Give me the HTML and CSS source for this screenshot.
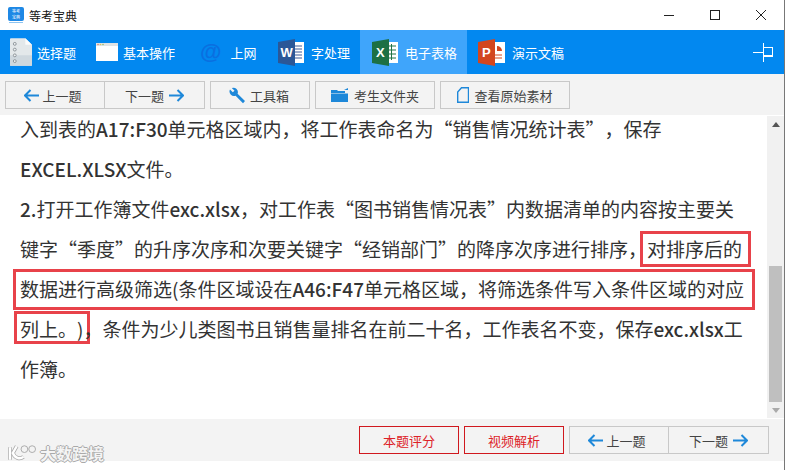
FILE: index.html
```html
<!DOCTYPE html>
<html lang="zh-CN">
<head>
    <meta charset="UTF-8">
    <title>等考宝典</title>
    <link rel="stylesheet" href="styles.css">
</head>
<body>
    <!-- Title bar -->
    <div class="titlebar">
        <svg class="logo" width="16" height="16" viewBox="0 0 16 16">
            <rect x="0" y="0" width="16" height="14" rx="2" fill="#1e88e5"/>
            <text x="8" y="6" class="logo-text">等考</text>
            <text x="8" y="12" class="logo-text">宝典</text>
            <rect x="1" y="15" width="14" height="1" fill="#8ec4f1"/>
        </svg>
        <span class="app-name">等考宝典</span>
        <div class="win-buttons">
            <svg width="12" height="12" viewBox="0 0 12 12"><path d="M1 6.500h10" stroke="#222" fill="none"/></svg>
            <svg width="12" height="12" viewBox="0 0 12 12"><rect x="1.500" y="1.500" width="9" height="9" stroke="#222" fill="none"/></svg>
            <svg width="12" height="12" viewBox="0 0 12 12"><path d="M1 1l10 10M11 1L1 11" stroke="#222" fill="none"/></svg>
        </div>
    </div>

    <!-- Blue subject tabs -->
    <div class="tabs">
        <div class="tab tab-choice">
            <svg width="22" height="28" viewBox="0 0 23 29">
                <path d="M1 0h15l7 7v21a1 1 0 0 1-1 1H1a1 1 0 0 1-1-1V1a1 1 0 0 1 1-1z" fill="#e3e8ea"/>
                <path d="M16 0l7 7h-7z" fill="#fafbfb"/>
                <path d="M0 18h23v10a1 1 0 0 1-1 1H1a1 1 0 0 1-1-1z" fill="#cfd8de"/>
                <g fill="#eef1f2" stroke="#8b9398"><circle cx="5" cy="6" r="1.500"/><circle cx="5" cy="12" r="1.500"/><circle cx="5" cy="18" r="1.500"/><circle cx="5" cy="24" r="1.500"/></g>
            </svg>
            <span>选择题</span>
        </div>
        <div class="tab tab-basic">
            <svg width="22" height="18" viewBox="0 0 22 18">
                <rect width="22" height="18" fill="#fff"/>
                <rect width="22" height="3" fill="#dfe3e5"/>
                <circle cx="2" cy="1.500" r=".8" fill="#e2836b"/><circle cx="4.500" cy="1.500" r=".8" fill="#e0c15e"/><circle cx="7" cy="1.500" r=".8" fill="#8cc16a"/>
            </svg>
            <span>基本操作</span>
        </div>
        <div class="tab tab-web">
            <span class="at">@</span>
            <span>上网</span>
        </div>
        <div class="tab tab-word">
            <svg width="26" height="27" viewBox="0 0 26 27">
                <rect x="13" y="3" width="13" height="21" fill="#fff"/>
                <path d="M15 7h9M15 10h9M15 13h9M15 16h9M15 19h9" stroke="#3c5a9a"/>
                <path d="M0 3L17 0v27L0 24z" fill="#2b5797"/>
                <text x="2.500" y="18" class="icon-letter">W</text>
            </svg>
            <span>字处理</span>
        </div>
        <div class="tab tab-excel active">
            <svg width="26" height="27" viewBox="0 0 26 27">
                <rect x="13" y="3" width="13" height="21" fill="#fff"/>
                <path d="M15 7h9M15 11h9M15 15h9M15 19h9M19.500 5v16" stroke="#217346"/>
                <path d="M0 3L17 0v27L0 24z" fill="#1d7044"/>
                <text x="4" y="18" class="icon-letter">X</text>
            </svg>
            <span>电子表格</span>
        </div>
        <div class="tab tab-ppt">
            <svg width="27" height="27" viewBox="0 0 27 27">
                <rect x="13" y="3" width="14" height="21" fill="#fff"/>
                <path d="M19 7a5 5 0 0 1 5 5h-5z" fill="#d2461f"/>
                <path d="M16 16h8M16 19h8" stroke="#d2461f"/>
                <path d="M0 3L17 0v27L0 24z" fill="#d2461f"/>
                <text x="4" y="18" class="icon-letter">P</text>
            </svg>
            <span>演示文稿</span>
        </div>
        <svg class="pin" width="21" height="19" viewBox="0 0 21 19">
            <path d="M0 9.500h10M10.500 0v19" stroke="#fff" fill="none"/>
            <rect x="10.500" y="4.500" width="9" height="9" stroke="#fff" fill="none"/>
            <rect x="10" y="12" width="10" height="2" fill="#fff"/>
        </svg>
    </div>

    <!-- Tool row -->
    <div class="toolbar">
        <div class="btn-group">
            <button class="btn"><svg class="arrow" width="15" height="13" viewBox="0 0 15 13"><path d="M6.500 1L1 6.500l5.500 5.500M1 6.500h14" /></svg>上一题</button>
            <button class="btn">下一题<svg class="arrow" width="15" height="13" viewBox="0 0 15 13"><path d="M8.500 1L14 6.500 8.500 12M14 6.500H0" /></svg></button>
        </div>
        <button class="btn w-tool">
            <svg width="17" height="17" viewBox="0 0 17 17"><path d="M1 2.500L3.800 5.300 5.500 3.800 2.800 1A4.500 4.500 0 0 1 8.600 6.800L16 14l-2 2.300L6.600 8.700A4.500 4.500 0 0 1 1 2.500z" fill="#1e88d9"/></svg>
            工具箱
        </button>
        <button class="btn w-folder">
            <svg width="18" height="14" viewBox="0 0 18 14"><path d="M0 2h6l1 1h7v2H0zM0 5.500h17V14H0z" fill="#1e88d9"/><path d="M13 2l4-2v2z" fill="#1e88d9"/></svg>
            考生文件夹
        </button>
        <button class="btn w-source">
            <svg width="12" height="16" viewBox="0 0 12 16"><path d="M4.500.7h7v14.600H.7V5z" fill="none" stroke="#1e88d9" stroke-width="1.400"/></svg>
            查看原始素材
        </button>
    </div>

    <!-- Question text -->
    <div class="main">
        <div class="question">
            <div class="line">入到表的<b>A17:F30</b>单元格区域内，将工作表命名为“销售情况统计表”，保存</div>
            <div class="line"><b>EXCEL.XLSX</b>文件。</div>
            <div class="line"><b>2.</b>打开工作簿文件<b>exc.xlsx</b>，对工作表“图书销售情况表”内数据清单的内容按主要关</div>
            <div class="line">键字“季度”的升序次序和次要关键字“经销部门”的降序次序进行排序，<span class="mark mark-one">对排序后的</span></div>
            <div class="line"><span class="mark mark-two">数据进行高级筛选(条件区域设在<b>A46:F47</b>单元格区域，将筛选条件写入条件区域的对应</span></div>
            <div class="line"><span class="mark mark-three">列上。)，</span>条件为少儿类图书且销售量排名在前二十名，工作表名不变，保存<b>exc.xlsx</b>工</div>
            <div class="line">作簿。</div>
        </div>
        <div class="scrollbar">
            <div class="scroll-up"></div>
            <div class="thumb"></div>
            <div class="scroll-down"></div>
        </div>
    </div>

    <!-- Bottom row -->
    <div class="bottombar">
        <div class="watermark">
            <svg width="28" height="18" viewBox="0 0 29 18">
                <path d="M2 3v13M9 2L5 9c2 5 7 7 11 4" fill="none" stroke="#aaa" stroke-width="4"/>
                <path d="M2 3v13M9 2L5 9c2 5 7 7 11 4" fill="none" stroke="#fff" stroke-width="2.500"/>
                <circle cx="17" cy="5" r="3.500" fill="none" stroke="#aaa"/><circle cx="25" cy="5" r="3.500" fill="none" stroke="#aaa"/>
            </svg>
            <span>大数跨境</span>
        </div>
        <button class="btn btn-red">本题评分</button>
        <button class="btn btn-red">视频解析</button>
        <div class="btn-group">
            <button class="btn"><svg class="arrow" width="15" height="13" viewBox="0 0 15 13"><path d="M6.500 1L1 6.500l5.500 5.500M1 6.500h14" /></svg>上一题</button>
            <button class="btn">下一题<svg class="arrow" width="15" height="13" viewBox="0 0 15 13"><path d="M8.500 1L14 6.500 8.500 12M14 6.500H0" /></svg></button>
        </div>
    </div>
</body>
</html>
```

FILE: styles.css
```css
* { margin: 0; padding: 0; box-sizing: border-box; font-family: "Noto Sans CJK SC", "Noto Sans", sans-serif; }
body { width: 785px; height: 470px; background: #fff; overflow: hidden; color: #333; border-right: 1px solid #777; }

.titlebar { height: 30px; display: flex; align-items: center; padding-left: 8px; background: #fff; }
.logo { margin-right: 5px; }
.logo-text { font-size: 4px; fill: #fff; text-anchor: middle; }
.app-name { font-size: 12px; color: #111; }
.win-buttons { margin-left: auto; display: flex; gap: 34px; padding-right: 17px; }

.tabs { height: 44px; background: #0288f0; display: flex; align-items: stretch; color: #fff; font-size: 13px; }
.tab { display: flex; align-items: center; gap: 5px; padding-left: 10px; }
.tab-choice { width: 86px; }
.tab-basic { width: 100px; }
.tab-web { width: 92px; gap: 9px; padding-left: 14px; }
.tab-word { width: 82px; padding-left: 0; gap: 7px; }
.tab-excel { width: 107px; padding-left: 12px; gap: 7px; }
.tab-ppt { padding-left: 11px; gap: 7px; }
.tab-excel.active { background: #3fa5fb; }
.at { font-size: 22px; line-height: 1; color: #0a6fe0; font-family: "Liberation Sans", sans-serif; font-weight: bold; }
.icon-letter { font-size: 13px; font-weight: bold; fill: #fff; font-family: "Liberation Sans", sans-serif; }
.pin { margin: auto 10px auto auto; }

.toolbar { height: 41px; background: #f3f3f3; display: flex; gap: 5px; padding: 7px 0 0 5px; }
.btn { height: 28px; background: #f3f3f3; border: 1px solid #c8c8c8; font-size: 13px; color: #444; display: flex; align-items: center; justify-content: center; gap: 3px; }
.btn-group { display: flex; flex: none; width: 200px; height: 28px; }
.btn-group .btn { width: 100px; padding-right: 4px; }
.btn-group .btn + .btn { margin-left: -1px; width: 101px; gap: 5px; padding-right: 0; }
.arrow { fill: none; stroke: #1e88d9; stroke-width: 2; }
.w-tool { width: 100px; gap: 4px; padding-right: 2px; }
.w-folder { width: 120px; gap: 5px; }
.w-source { width: 130px; gap: 5px; }

.main { height: 304px; display: flex; background: #fff; }
.question { flex: 1; padding-left: 20px; font-size: 19px; color: #333; text-spacing-trim: space-all; isolation: isolate; }
.question b { font-weight: 500; }
.line { height: 40px; line-height: 28px; white-space: nowrap; }
/* red annotation boxes sit behind the text, they don't move it */
.mark { position: relative; }
.mark::after { content: ""; position: absolute; z-index: -1; border: 3px solid #e8424a; }
.mark-one::after { left: -7px; right: -9px; top: -4px; bottom: -5px; }
.mark-two::after { left: -7px; right: -11px; top: -6px; bottom: -8px; }
.mark-three::after { left: -6px; right: 12px; top: -4px; bottom: -2px; }
.scrollbar { width: 17px; margin-top: 1px; height: 302px; background: #f1f1f1; display: flex; flex-direction: column; align-items: center; }
.scroll-up { margin-top: 6px; border: 4px solid transparent; border-top: 0; border-bottom: 5px solid #555; }
.thumb { width: 13px; height: 136px; margin-top: 139px; background: #bfbfbf; }
.scroll-down { margin-top: 6px; border: 4px solid transparent; border-bottom: 0; border-top: 5px solid #aaa; }

.bottombar { height: 42px; background: #f3f3f3; display: flex; align-items: center; gap: 5px; padding-left: 359px; position: relative; }
.btn-red { width: 100px; border: 1px solid #d0181e; color: #dd2228; }
.watermark { position: absolute; left: 8px; top: 25px; display: flex; align-items: center; gap: 4px; }
.watermark span { font-size: 16px; line-height: 18px; font-weight: bold; color: #f4f4f4; text-shadow: 1px 0 #aaa, -1px 0 #aaa, 0 1px #aaa, 0 -1px #aaa; }
```
